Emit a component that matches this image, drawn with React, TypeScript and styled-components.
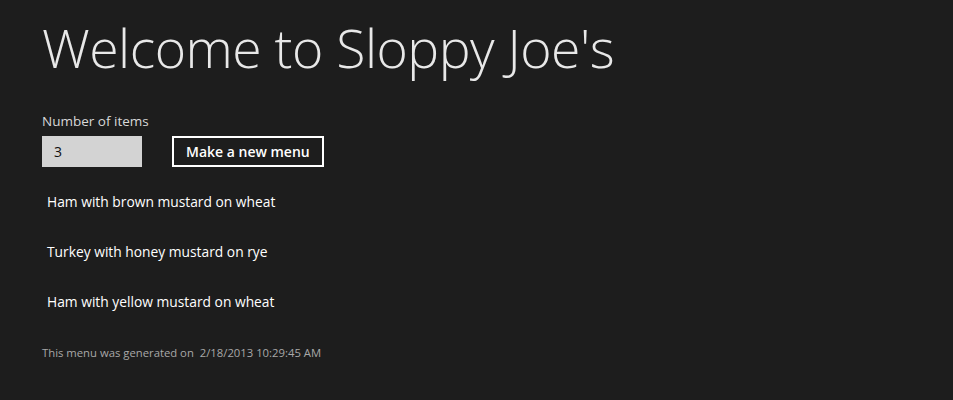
import styled, { createGlobalStyle } from "styled-components";

const GlobalStyle = createGlobalStyle`
  html, body {
    margin: 0;
    padding: 0;
    background: #1d1d1d;
  }
  body {
    font-family: "Open Sans", "Noto Sans", sans-serif;
    color: #ffffff;
  }
`;

const Page = styled.main`
  min-height: 400px;
  padding: 12px 0 0 42px;
  box-sizing: border-box;
`;

const Title = styled.h1`
  margin: 0;
  font-size: 53.5px;
  font-weight: 300;
  line-height: 72px;
  color: #e8e8e8;
  letter-spacing: -0.5px;
`;

const Form = styled.section`
  margin-top: 28px;
  display: flex;
  flex-direction: column;
`;

const Label = styled.label`
  font-size: 13.5px;
  line-height: 18px;
  color: #d8d8d8;
`;

const Controls = styled.div`
  margin-top: 6px;
  display: flex;
  align-items: center;
  gap: 30px;
`;

const CountInput = styled.input`
  width: 100px;
  height: 31px;
  box-sizing: border-box;
  border: none;
  background: #d3d3d3;
  padding: 0 12px;
  font-family: inherit;
  font-size: 14px;
  color: #111;
  outline: none;
`;

const MenuButton = styled.button`
  height: 31px;
  padding: 0 12px;
  box-sizing: border-box;
  background: transparent;
  border: 2px solid #ffffff;
  color: #ffffff;
  font-family: inherit;
  font-size: 14px;
  font-weight: 600;
  cursor: pointer;
`;

const MenuList = styled.ul`
  list-style: none;
  margin: 19px 0 0;
  padding: 0 0 0 5px;
`;

const MenuItem = styled.li`
  height: 50px;
  line-height: 32px;
  font-size: 13.8px;
  color: #ffffff;
`;

const Footer = styled.p`
  margin: 9px 0 0;
  font-size: 11.3px;
  color: #a8a8a8;
  white-space: pre;
`;

const items = [
  "Ham with brown mustard on wheat",
  "Turkey with honey mustard on rye",
  "Ham with yellow mustard on wheat",
];

export default function App() {
  return (
    <>
      <GlobalStyle />
      <Page>
        <Title>Welcome to Sloppy Joe's</Title>
        <Form>
          <Label htmlFor="count">Number of items</Label>
          <Controls>
            <CountInput id="count" defaultValue="3" />
            <MenuButton>Make a new menu</MenuButton>
          </Controls>
        </Form>
        <MenuList>
          {items.map((item) => (
            <MenuItem key={item}>{item}</MenuItem>
          ))}
        </MenuList>
        <Footer>{"This menu was generated on  2/18/2013 10:29:45 AM"}</Footer>
      </Page>
    </>
  );
}
